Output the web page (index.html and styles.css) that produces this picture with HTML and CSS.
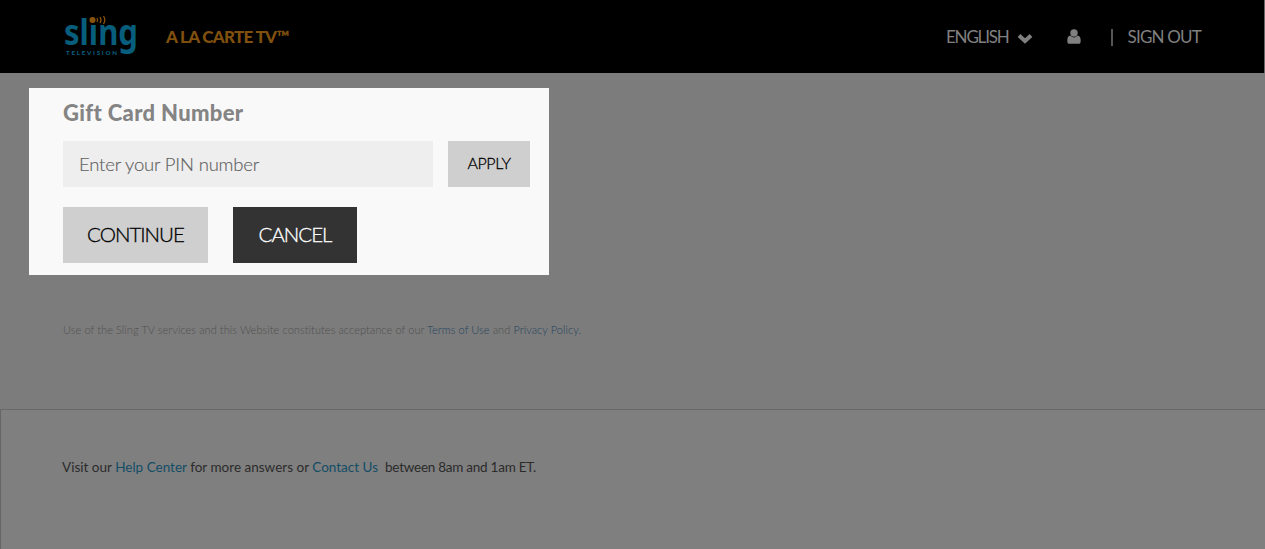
FILE: index.html
```
<!DOCTYPE html>
<html lang="en">
<head>
  <meta charset="UTF-8">
  <title>Sling TV - Gift Card</title>
  <link rel="stylesheet" href="styles.css">
</head>
<body>
  <header class="header">
    <svg class="logo" width="76" height="66" viewBox="0 0 76 66" role="img" aria-label="Sling Television">
      <text class="logo-name" x="1" y="41" textLength="74" lengthAdjust="spacingAndGlyphs">slıng</text>
      <text class="logo-sub" x="3" y="50.8" textLength="51">TELEVISION</text>
      <g class="logo-signal">
        <circle cx="29.5" cy="16" r="3"/>
        <path d="M34 14q1.2 2 0 4M37 13q2 3 0 6M40.5 12q2.6 4 0 8"/>
      </g>
    </svg>
    <span class="brand">A LA CARTE TV™</span>
    <nav class="nav">
      <a class="language" href="#">ENGLISH</a>
      <svg class="chevron" width="16" height="11" viewBox="0 0 16 11"><path d="M2 2.5l6 5.5 6-5.5"/></svg>
      <svg class="user" width="14" height="15" viewBox="0 0 14 15"><circle cx="7" cy="4" r="3.7"/><path d="M3.4 6.6C5.3 9 8.7 9 10.6 6.6 13 7 13.7 9 13.7 12c0 2-.8 2.8-2.5 2.8H2.8C1.1 14.8.3 14 .3 12c0-3 .7-5 3.1-5.4z"/></svg>
      <span class="divider"></span>
      <a class="signout" href="#">SIGN OUT</a>
    </nav>
  </header>

  <main class="main">
    <form class="gift-card">
      <label class="title" for="pin">Gift Card Number</label>
      <div class="row">
        <input class="pin" type="text" id="pin" placeholder="Enter your PIN number">
        <button class="btn apply" type="button">APPLY</button>
      </div>
      <div class="actions">
        <button class="btn continue" type="button">CONTINUE</button>
        <button class="btn cancel" type="button">CANCEL</button>
      </div>
    </form>
    <p class="terms">Use of the Sling TV services and this Website constitutes acceptance of our <a href="#">Terms of Use</a> and <a href="#">Privacy Policy.</a></p>
  </main>

  <footer class="footer">
    <p class="help">Visit our <a href="#">Help Center</a> for more answers or <a href="#">Contact Us</a>&nbsp; <span class="hours">between 8am and 1am ET.</span></p>
  </footer>
</body>
</html>
```
FILE: styles.css
```
* {
  box-sizing: border-box;
}

body {
  margin: 0;
  height: 549px;
  overflow: hidden;
  display: flex;
  flex-direction: column;
  font-family: Lato, sans-serif;
  background-color: #7f7f7f;
}

a {
  color: inherit;
  text-decoration: none;
}

p {
  margin: 0;
}

.header {
  display: flex;
  align-items: center;
  height: 73px;
  padding: 0 63px;
  background-color: #000;
  border-right: 1px solid #666;
}

.logo {
  overflow: visible;
}

.logo-name {
  font-family: "Noto Sans", sans-serif;
  font-size: 35px;
  font-weight: 700;
  fill: #075d7c;
}

.logo-sub {
  font-size: 6.2px;
  font-weight: 900;
  fill: #075d7c;
}

.logo-signal {
  fill: #8a530c;
}

.logo-signal path {
  fill: none;
  stroke: #8a530c;
  stroke-width: 1.3;
}

.brand {
  margin-left: 27px;
  font-size: 17px;
  font-weight: 900;
  letter-spacing: -0.7px;
  color: #80500e;
}

.nav {
  display: flex;
  align-items: center;
  margin-left: auto;
  font-size: 17px;
  color: #808080;
}

.language {
  letter-spacing: -1.2px;
}

.chevron {
  margin: 3px 0 0 8px;
  fill: none;
  stroke: #808080;
  stroke-width: 4;
}

.user {
  margin-left: 34px;
  fill: #808080;
}

.divider {
  width: 2px;
  height: 17px;
  margin: 1px 15px 0 30px;
  background-color: #555;
}

.signout {
  margin-top: -1px;
  letter-spacing: -0.8px;
}

.main {
  height: 337px;
  padding: 15px 29px 0;
  background-color: #7c7c7c;
  border-bottom: 1px solid #696969;
}

.gift-card {
  width: 520px;
  height: 187px;
  padding: 12px 19px 0 34px;
  background-color: #f9f9f9;
}

.title {
  display: block;
  height: 41px;
  line-height: 26px;
  font-size: 22px;
  font-weight: 900;
  letter-spacing: 0.33px;
  color: #848484;
}

.row {
  display: flex;
  justify-content: space-between;
  height: 46px;
}

.pin {
  width: 370px;
  padding: 0 16px;
  border: none;
  background-color: #eee;
  font-family: Lato, sans-serif;
  font-size: 18.5px;
  font-weight: 300;
  letter-spacing: -0.18px;
}

.pin::placeholder {
  color: #606060;
  -webkit-text-stroke: 0.15px #606060;
}

.btn {
  padding: 0 0 3px;
  border: none;
  background-color: #cfcfcf;
  font-family: Lato, sans-serif;
  font-weight: 300;
  color: #000;
  -webkit-text-stroke: 0.3px;
}

.apply {
  width: 82px;
  font-size: 16px;
  letter-spacing: -0.4px;
}

.actions {
  display: flex;
  gap: 25px;
  height: 56px;
  margin-top: 20px;
}

.continue,
.cancel {
  width: 145px;
  font-size: 20.5px;
  letter-spacing: -1px;
}

.cancel {
  width: 124px;
  background-color: #333;
  color: #fff;
}

.terms {
  padding: 47px 34px 0;
  font-size: 11px;
  line-height: 16px;
  font-weight: 300;
  letter-spacing: 0.07px;
  color: #505050;
}

.terms a {
  color: #24435c;
}

.footer {
  flex: 1;
  padding: 47px 61px;
  border-left: 1px solid #666;
}

.help {
  font-size: 13.5px;
  line-height: 20px;
  letter-spacing: 0.01px;
  color: #2b2b2b;
}

.help a {
  color: #124d66;
}

.hours {
  letter-spacing: -0.25px;
}
```
